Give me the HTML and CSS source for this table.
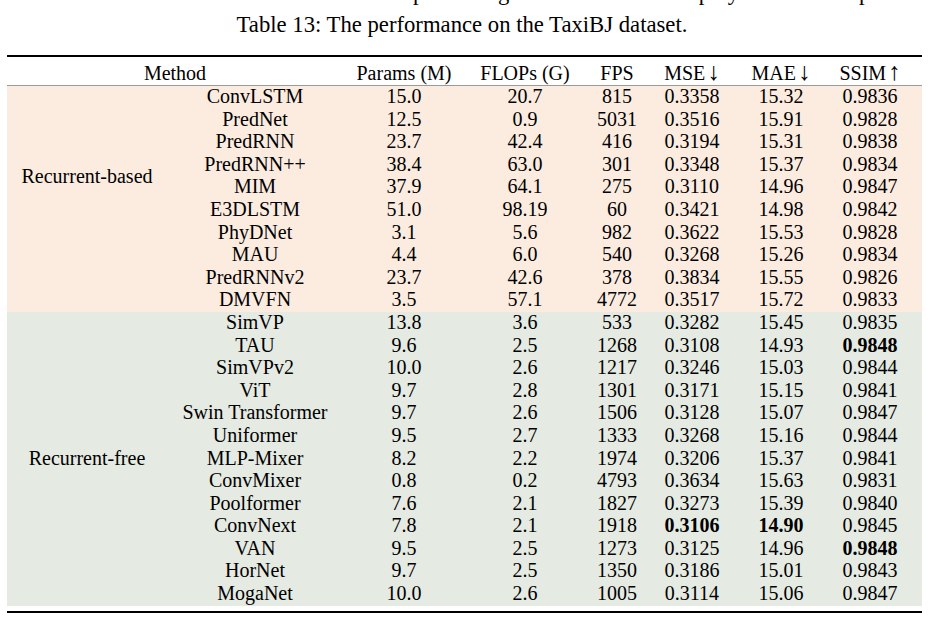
FILE: index.html
```html
<!DOCTYPE html>
<html>
<head>
<meta charset="utf-8">
<link rel="stylesheet" href="styles.css">
</head>
<body>
<div class="topline">
  <div class="topline-text">
    <span class="frag f1">pre</span><span class="frag f2">gen</span><span class="frag f3">prey</span><span class="frag f4">per</span>
  </div>
</div>
<div class="caption">Table 13: The performance on the TaxiBJ dataset.</div>
<div class="table-wrap">
<table class="results">
  <colgroup>
    <col class="c-group"><col class="c-method"><col class="c-params"><col class="c-flops"><col class="c-fps"><col class="c-mse"><col class="c-mae"><col class="c-ssim">
  </colgroup>
  <thead>
    <tr>
      <th colspan="2">Method</th>
      <th>Params (M)</th>
      <th>FLOPs (G)</th>
      <th>FPS</th>
      <th>MSE<span class="arr">↓</span></th>
      <th>MAE<span class="arr">↓</span></th>
      <th class="last">SSIM<span class="arr">↑</span></th>
    </tr>
  </thead>
  <tbody class="rb">
    <tr><td rowspan="10" class="group group-rb">Recurrent-based</td><td>ConvLSTM</td><td>15.0</td><td>20.7</td><td>815</td><td>0.3358</td><td>15.32</td><td class="last">0.9836</td></tr>
    <tr><td>PredNet</td><td>12.5</td><td>0.9</td><td>5031</td><td>0.3516</td><td>15.91</td><td class="last">0.9828</td></tr>
    <tr><td>PredRNN</td><td>23.7</td><td>42.4</td><td>416</td><td>0.3194</td><td>15.31</td><td class="last">0.9838</td></tr>
    <tr><td>PredRNN++</td><td>38.4</td><td>63.0</td><td>301</td><td>0.3348</td><td>15.37</td><td class="last">0.9834</td></tr>
    <tr><td>MIM</td><td>37.9</td><td>64.1</td><td>275</td><td>0.3110</td><td>14.96</td><td class="last">0.9847</td></tr>
    <tr><td>E3DLSTM</td><td>51.0</td><td>98.19</td><td>60</td><td>0.3421</td><td>14.98</td><td class="last">0.9842</td></tr>
    <tr><td>PhyDNet</td><td>3.1</td><td>5.6</td><td>982</td><td>0.3622</td><td>15.53</td><td class="last">0.9828</td></tr>
    <tr><td>MAU</td><td>4.4</td><td>6.0</td><td>540</td><td>0.3268</td><td>15.26</td><td class="last">0.9834</td></tr>
    <tr><td>PredRNNv2</td><td>23.7</td><td>42.6</td><td>378</td><td>0.3834</td><td>15.55</td><td class="last">0.9826</td></tr>
    <tr><td>DMVFN</td><td>3.5</td><td>57.1</td><td>4772</td><td>0.3517</td><td>15.72</td><td class="last">0.9833</td></tr>
  </tbody>
  <tbody class="rf">
    <tr><td rowspan="13" class="group">Recurrent-free</td><td>SimVP</td><td>13.8</td><td>3.6</td><td>533</td><td>0.3282</td><td>15.45</td><td class="last">0.9835</td></tr>
    <tr><td>TAU</td><td>9.6</td><td>2.5</td><td>1268</td><td>0.3108</td><td>14.93</td><td class="last"><b>0.9848</b></td></tr>
    <tr><td>SimVPv2</td><td>10.0</td><td>2.6</td><td>1217</td><td>0.3246</td><td>15.03</td><td class="last">0.9844</td></tr>
    <tr><td>ViT</td><td>9.7</td><td>2.8</td><td>1301</td><td>0.3171</td><td>15.15</td><td class="last">0.9841</td></tr>
    <tr><td>Swin Transformer</td><td>9.7</td><td>2.6</td><td>1506</td><td>0.3128</td><td>15.07</td><td class="last">0.9847</td></tr>
    <tr><td>Uniformer</td><td>9.5</td><td>2.7</td><td>1333</td><td>0.3268</td><td>15.16</td><td class="last">0.9844</td></tr>
    <tr><td>MLP-Mixer</td><td>8.2</td><td>2.2</td><td>1974</td><td>0.3206</td><td>15.37</td><td class="last">0.9841</td></tr>
    <tr><td>ConvMixer</td><td>0.8</td><td>0.2</td><td>4793</td><td>0.3634</td><td>15.63</td><td class="last">0.9831</td></tr>
    <tr><td>Poolformer</td><td>7.6</td><td>2.1</td><td>1827</td><td>0.3273</td><td>15.39</td><td class="last">0.9840</td></tr>
    <tr><td>ConvNext</td><td>7.8</td><td>2.1</td><td>1918</td><td><b>0.3106</b></td><td><b>14.90</b></td><td class="last">0.9845</td></tr>
    <tr><td>VAN</td><td>9.5</td><td>2.5</td><td>1273</td><td>0.3125</td><td>14.96</td><td class="last"><b>0.9848</b></td></tr>
    <tr><td>HorNet</td><td>9.7</td><td>2.5</td><td>1350</td><td>0.3186</td><td>15.01</td><td class="last">0.9843</td></tr>
    <tr><td>MogaNet</td><td>10.0</td><td>2.6</td><td>1005</td><td>0.3114</td><td>15.06</td><td class="last">0.9847</td></tr>
  </tbody>
</table>
</div>
</body>
</html>
```
FILE: styles.css
```css
html, body {
  margin: 0;
  padding: 0;
  background: #ffffff;
}
body {
  font-family: "Liberation Serif", "Times New Roman", serif;
  color: #000;
}
.topline {
  height: 7px;
  overflow: hidden;
}
.topline-text {
  display: flex;
  font-size: 22.7px;
  line-height: 22px;
  margin-top: -18px;
  white-space: nowrap;
}
.frag { display: inline-block; }
.f1 { margin-left: 413px; }
.f2 { margin-left: 56px; }
.f3 { margin-left: 168px; }
.f4 { margin-left: 120px; }

.caption {
  margin-top: 3px;
  font-size: 22.7px;
  line-height: 30px;
  text-align: center;
  padding-right: 6px;
}
.table-wrap {
  margin: 15px 0 0 7px;
  width: 915px;
  border-top: 2px solid #000;
  border-bottom: 2px solid #000;
  padding-bottom: 5px;
}
.results {
  width: 915px;
  table-layout: fixed;
  border-collapse: collapse;
  border-spacing: 0;
  font-size: 20px;
}
.c-group { width: 160px; }
.c-method { width: 176px; }
.c-params { width: 122px; }
.c-flops { width: 120px; }
.c-fps { width: 64px; }
.c-mse { width: 86px; }
.c-mae { width: 92px; }
.c-ssim { width: 95px; }

.results th {
  font-weight: normal;
  text-align: center;
  padding: 5px 0 1px;
  line-height: 22px;
  border-bottom: 1px solid #9a9a9a;
  white-space: nowrap;
}
.results td {
  text-align: center;
  padding: 0 0 1px;
  line-height: 21.6px;
  white-space: nowrap;
}
.results .last { padding-right: 9px; }
.arr {
  margin-left: 2px;
  font-size: 25px;
  line-height: 0;
}
.rb td { background: #fcece0; }
.rf td { background: #e5eae2; }
.results td.group { vertical-align: middle; }
.results td.group-rb {
  vertical-align: top;
  padding-top: 80px;
}
b { font-weight: bold; }
```
